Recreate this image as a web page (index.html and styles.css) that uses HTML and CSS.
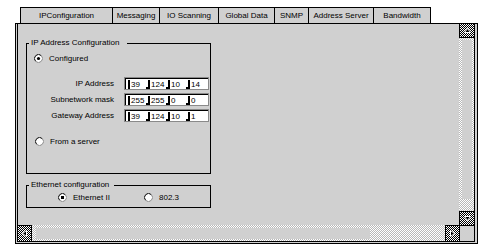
FILE: index.html
```html
<!DOCTYPE html>
<html lang="en">
<head>
  <meta charset="UTF-8" />
  <title>Ethernet module configuration</title>
  <link rel="stylesheet" href="styles.css">
</head>
<body>

<div class="tabs">
  <div class="tab" style="width:92px">IPConfiguration</div>
  <div class="tab" style="width:47px">Messaging</div>
  <div class="tab" style="width:59px">IO Scanning</div>
  <div class="tab" style="width:56px">Global Data</div>
  <div class="tab" style="width:34px">SNMP</div>
  <div class="tab" style="width:65px">Address Server</div>
  <div class="tab last" style="width:58px">Bandwidth</div>
</div>

<div class="window">
  <div class="pane">
    <div class="content">

      <div class="group ip-group">
        <span class="legend">IP Address Configuration</span>

        <div class="radio-row configured">
          <svg class="radio" width="9" height="9" viewBox="0 0 9 9"><circle cx="4.5" cy="4.5" r="4" fill="#fff"/><path d="M1.67 7.33 A4 4 0 0 1 7.33 1.67" stroke="#000" fill="none"/><path d="M7.33 1.67 A4 4 0 0 1 1.67 7.33" stroke="#888" fill="none"/><circle cx="4.5" cy="4.5" r="1.6" fill="#000"/></svg>
          <span>Configured</span>
        </div>

        <div class="addr-rows">
          <div class="addr-row">
            <span class="addr-label">IP Address</span>
            <div class="addr"><div class="addr-in">
              <span class="oct">39</span><span class="oct">124</span><span class="oct">10</span><span class="oct">14</span>
            </div></div>
          </div>
          <div class="addr-row">
            <span class="addr-label">Subnetwork mask</span>
            <div class="addr"><div class="addr-in">
              <span class="oct">255</span><span class="oct">255</span><span class="oct">0</span><span class="oct">0</span>
            </div></div>
          </div>
          <div class="addr-row">
            <span class="addr-label">Gateway Address</span>
            <div class="addr"><div class="addr-in">
              <span class="oct">39</span><span class="oct">124</span><span class="oct">10</span><span class="oct">1</span>
            </div></div>
          </div>
        </div>

        <div class="radio-row server">
          <svg class="radio" width="9" height="9" viewBox="0 0 9 9"><circle cx="4.5" cy="4.5" r="4" fill="#fff"/><path d="M1.67 7.33 A4 4 0 0 1 7.33 1.67" stroke="#000" fill="none"/><path d="M7.33 1.67 A4 4 0 0 1 1.67 7.33" stroke="#888" fill="none"/></svg>
          <span>From a server</span>
        </div>
      </div>

      <div class="group eth-group">
        <span class="legend">Ethernet configuration</span>
        <div class="eth-row">
          <div class="radio-row eth2">
            <svg class="radio" width="9" height="9" viewBox="0 0 9 9"><circle cx="4.5" cy="4.5" r="4" fill="#fff"/><path d="M1.67 7.33 A4 4 0 0 1 7.33 1.67" stroke="#000" fill="none"/><path d="M7.33 1.67 A4 4 0 0 1 1.67 7.33" stroke="#888" fill="none"/><rect x="3" y="3" width="3" height="3" fill="#000"/></svg>
            <span>Ethernet II</span>
          </div>
          <div class="radio-row ieee">
            <svg class="radio" width="9" height="9" viewBox="0 0 9 9"><circle cx="4.5" cy="4.5" r="4" fill="#fff"/><path d="M1.67 7.33 A4 4 0 0 1 7.33 1.67" stroke="#000" fill="none"/><path d="M7.33 1.67 A4 4 0 0 1 1.67 7.33" stroke="#888" fill="none"/></svg>
            <span>802.3</span>
          </div>
        </div>
      </div>

    </div>

    <div class="vscroll">
      <div class="sbtn up"><svg width="7" height="5" viewBox="0 0 7 5"><path d="M3.5 0.5 L6.5 4.5 L0.5 4.5 Z" fill="#000" stroke="#fff"/></svg></div>
      <div class="vtrack"><div class="vthumb"></div></div>
      <div class="sbtn down"><svg width="7" height="5" viewBox="0 0 7 5"><path d="M0.5 0.5 L6.5 0.5 L3.5 4.5 Z" fill="#000" stroke="#fff"/></svg></div>
    </div>

    <div class="hscroll">
      <div class="sbtn left"><svg width="5" height="7" viewBox="0 0 5 7"><path d="M0.5 3.5 L4.5 0.5 L4.5 6.5 Z" fill="#000" stroke="#fff"/></svg></div>
      <div class="htrack"><div class="hthumb"></div></div>
      <div class="sbtn right"><svg width="5" height="7" viewBox="0 0 5 7"><path d="M0.5 0.5 L4.5 3.5 L0.5 6.5 Z" fill="#000" stroke="#fff"/></svg></div>
    </div>

    <div class="corner"></div>
  </div>
</div>

</body>
</html>
```

FILE: styles.css
```css
body {
  margin: 0;
  background-color: #fff;
  color: #000;
  font-family: "Liberation Sans", Arial, sans-serif;
  font-size: 8px;
  line-height: 10px;
}

.tabs {
  display: flex;
  margin: 7px 0 0 20px;
  height: 16px;
}

.tab {
  box-sizing: border-box;
  height: 16px;
  border-top: 1px solid #000;
  border-left: 1px solid #000;
  background-color: #d0d0d0;
  display: flex;
  align-items: center;
  justify-content: center;
  white-space: nowrap;
}

.tab.last {
  border-right: 1px solid #000;
}

.window {
  box-sizing: border-box;
  width: 463px;
  height: 221px;
  margin-left: 15px;
  border: 1px solid #000;
  padding: 0 2px 1px 1px;
  background-color: #d0d0d0;
}

.pane {
  display: grid;
  grid-template-columns: 441px 15px;
  grid-template-rows: 201px 16px;
  border: 1px solid #000;
  border-top: none;
}

.content {
  grid-column: 1;
  grid-row: 1;
  padding: 19px 0 0 8px;
}

/* group boxes */
.group {
  position: relative;
  box-sizing: border-box;
  width: 185px;
  border: 1px solid #000;
}

.ip-group {
  height: 131px;
  padding: 10px 0 0 7px;
}

.eth-group {
  height: 23px;
  margin-top: 11px;
  padding: 7px 0 0 31px;
}

.legend {
  position: absolute;
  top: -6px;
  left: 2px;
  padding: 0 8px 0 2px;
  background-color: #d0d0d0;
  white-space: nowrap;
}

.eth-group .legend {
  padding-right: 5px;
}

.radio-row {
  display: flex;
  align-items: center;
  gap: 6px;
  height: 9px;
  white-space: nowrap;
}

.radio {
  display: block;
  flex: none;
}

.server {
  margin: 15px 0 0 1px;
}

.eth-row {
  display: flex;
}

.eth2 {
  width: 86px;
}

/* address rows */
.addr-rows {
  display: flex;
  flex-direction: column;
  gap: 3px;
  margin-top: 14px;
}

.addr-row {
  display: flex;
  align-items: center;
  gap: 10px;
  height: 13px;
}

.addr-label {
  width: 80px;
  text-align: right;
  white-space: nowrap;
}

.addr {
  box-sizing: border-box;
  width: 85px;
  height: 13px;
  border: 1px solid #8a8a8a;
}

.addr-in {
  box-sizing: border-box;
  height: 11px;
  border-top: 1px solid #000;
  border-left: 1px solid #000;
  background-color: #fff;
  display: flex;
  padding: 1px 0 0 2px;
}

.oct {
  box-sizing: border-box;
  width: 20px;
  height: 9px;
  line-height: 9px;
  border-left: 2px solid #000;
  padding-left: 1px;
  position: relative;
}

.oct + .oct::before {
  content: "";
  position: absolute;
  left: -4px;
  bottom: 0;
  width: 2px;
  height: 2px;
  background-color: #000;
}

/* scrollbars */
.sbtn {
  box-sizing: border-box;
  display: flex;
  align-items: center;
  justify-content: center;
  background: repeating-conic-gradient(#000 0 25%, #fff 0 50%) 0 0 / 2px 2px;
}

.sbtn svg {
  display: block;
}

.vscroll {
  grid-column: 2;
  grid-row: 1;
  display: flex;
  flex-direction: column;
}

.up, .down {
  height: 14px;
  border-left: 1px solid #000;
}

.up {
  border-bottom: 1px solid #000;
}

.down {
  border-top: 1px solid #000;
}

.vtrack {
  flex: 1;
  padding: 2px 2px 12px 3px;
  background: repeating-conic-gradient(#fff 0 25%, #b8b8b8 0 50%) 0 0 / 2px 2px;
}

.vthumb {
  height: 159px;
  background-color: #d0d0d0;
}

.hscroll {
  grid-column: 1;
  grid-row: 2;
  display: flex;
}

.left, .right {
  width: 14px;
  border-top: 1px solid #000;
}

.left {
  border-right: 1px solid #000;
}

.right {
  border-left: 1px solid #000;
}

.htrack {
  flex: 1;
  padding: 3px 0 0 4px;
  background: repeating-conic-gradient(#fff 0 25%, #b8b8b8 0 50%) 0 0 / 2px 2px;
}

.hthumb {
  width: 334px;
  height: 11px;
  background-color: #d0d0d0;
}

.corner {
  grid-column: 2;
  grid-row: 2;
  border-left: 1px solid #000;
  border-top: 1px solid #000;
  background-color: #d0d0d0;
}
```
